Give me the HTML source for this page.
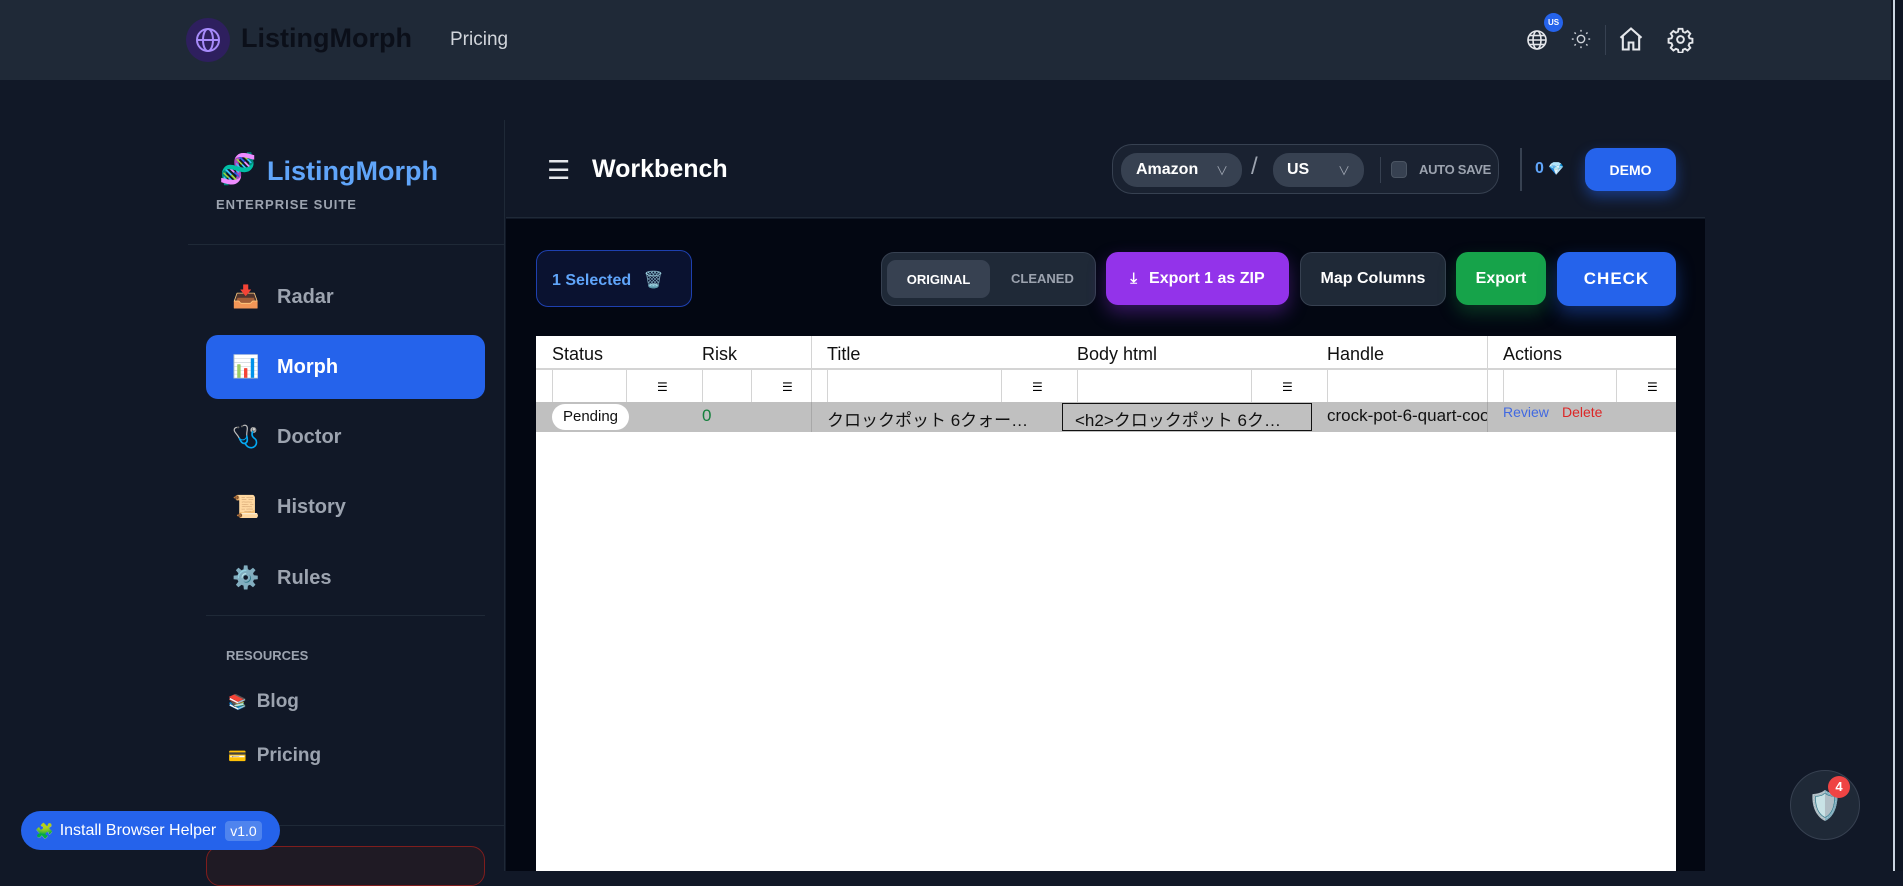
<!DOCTYPE html>
<html><head><meta charset="utf-8"><style>
*{box-sizing:border-box;margin:0;padding:0}
body{width:1903px;height:871px;overflow:hidden;background:#111827;font-family:"Liberation Sans","Noto Sans CJK JP",sans-serif;position:relative}
.a{position:absolute}
.nav{position:absolute;left:206px;width:279px;height:64px;display:flex;align-items:center;font-size:20px;font-weight:bold;color:#9ca3af}
.nav .ic{width:34px;margin-left:23px;margin-right:14px;font-size:22px;text-align:center}
.btn{position:absolute;display:flex;align-items:center;justify-content:center;color:#fff;font-weight:bold;font-size:16px;border-radius:12px}
.th{position:absolute;top:344px;font-size:18px;color:#111}
.fc{position:absolute;top:369px;height:33px;border-left:1px solid #d4d4d4}
.fi{position:absolute;top:380px;font-size:12px}
.td{position:absolute;top:406px;font-size:17px;color:#111;white-space:nowrap}
</style></head><body>
<div class="a" style="left:0;top:0;width:1891px;height:80px;background:#1f2937"></div>
<div class="a" style="left:1891px;top:0;width:12px;height:871px;background:#0f1623"></div>
<div class="a" style="left:1893px;top:0;width:2px;height:871px;background:#cbd5e1"></div>
<div class="a" style="left:186px;top:18px;width:44px;height:44px;border-radius:50%;background:#2e1f5e"></div>
<svg class="a" style="left:193px;top:25px" width="30" height="30" viewBox="0 0 30 30" fill="none" stroke="#a78bfa" stroke-width="2"><circle cx="15" cy="15" r="11"/><ellipse cx="15" cy="15" rx="5" ry="11"/><line x1="4" y1="15" x2="26" y2="15"/></svg>
<div class="a" style="left:241px;top:23px;font-size:27px;font-weight:bold;color:#0b0f19">ListingMorph</div>
<div class="a" style="left:450px;top:29px;font-size:19px;color:#d1d5db">Pricing</div>
<svg class="a" style="left:1525px;top:28px" width="24" height="24" viewBox="0 0 24 24" fill="none" stroke="#e5e7eb" stroke-width="1.6"><circle cx="12" cy="12" r="9"/><ellipse cx="12" cy="12" rx="4" ry="9"/><line x1="3" y1="12" x2="21" y2="12"/><line x1="4.5" y1="7.5" x2="19.5" y2="7.5"/><line x1="4.5" y1="16.5" x2="19.5" y2="16.5"/></svg>
<div class="a" style="left:1544px;top:13px;width:19px;height:19px;border-radius:50%;background:#2563eb;color:#fff;font-size:8px;font-weight:bold;text-align:center;line-height:19px">US</div>
<svg class="a" style="left:1570px;top:28px" width="22" height="22" viewBox="0 0 24 24" fill="none" stroke="#d1d5db" stroke-width="1.5"><circle cx="12" cy="12" r="4"/><path d="M12 2v2M12 20v2M2 12h2M20 12h2M4.9 4.9l1.4 1.4M17.7 17.7l1.4 1.4M4.9 19.1l1.4-1.4M17.7 6.3l1.4-1.4"/></svg>
<div class="a" style="left:1605px;top:25px;width:1px;height:30px;background:#374151"></div>
<svg class="a" style="left:1617px;top:25px" width="28" height="28" viewBox="0 0 24 24" fill="none" stroke="#e5e7eb" stroke-width="1.8"><path d="M3 11L12 3l9 8M5 9.5V21h5v-6h4v6h5V9.5"/></svg>
<svg class="a" style="left:1667px;top:26px" width="27" height="27" viewBox="0 0 24 24" fill="none" stroke="#e5e7eb" stroke-width="1.7"><circle cx="12" cy="12" r="3"/><path d="M10.3 2.5h3.4l.5 2.6 1.9.8 2.2-1.5 2.4 2.4-1.5 2.2.8 1.9 2.6.5v3.4l-2.6.5-.8 1.9 1.5 2.2-2.4 2.4-2.2-1.5-1.9.8-.5 2.6h-3.4l-.5-2.6-1.9-.8-2.2 1.5-2.4-2.4 1.5-2.2-.8-1.900-2.6-.5v-3.4l2.6-.5.8-1.9-1.5-2.2 2.4-2.4 2.2 1.5 1.9-.8z"/></svg>

<div class="a" style="left:188px;top:120px;width:317px;height:751px;background:#111827;border-right:1px solid #1f2937"></div>
<div class="a" style="left:219px;top:152px;font-size:30px">🧬</div>
<div class="a" style="left:267px;top:156px;font-size:27px;font-weight:bold;color:#60a5fa">ListingMorph</div>
<div class="a" style="left:216px;top:197px;font-size:13px;font-weight:bold;color:#9ca3af;letter-spacing:1px">ENTERPRISE SUITE</div>
<div class="a" style="left:188px;top:244px;width:317px;height:1px;background:#1f2937"></div>
<div class="nav" style="top:265px"><span class="ic">📥</span>Radar</div>
<div class="nav" style="top:335px;background:#2563eb;color:#fff;border-radius:12px"><span class="ic">📊</span>Morph</div>
<div class="nav" style="top:405px"><span class="ic">🩺</span>Doctor</div>
<div class="nav" style="top:475px"><span class="ic">📜</span>History</div>
<div class="nav" style="top:546px"><span class="ic">⚙️</span>Rules</div>
<div class="a" style="left:206px;top:615px;width:279px;height:1px;background:#1f2937"></div>
<div class="a" style="left:226px;top:648px;font-size:13px;font-weight:bold;color:#9ca3af">RESOURCES</div>
<div class="a" style="left:228px;top:691px;font-size:19px;font-weight:bold;color:#9ca3af"><span style="font-size:15px;margin-right:10px">📚</span>Blog</div>
<div class="a" style="left:228px;top:745px;font-size:19px;font-weight:bold;color:#9ca3af"><span style="font-size:15px;margin-right:10px">💳</span>Pricing</div>
<div class="a" style="left:188px;top:825px;width:317px;height:1px;background:#1f2937"></div>
<div class="a" style="left:206px;top:846px;width:279px;height:40px;border:1px solid #7f1d1d;border-radius:14px;background:#1f1a24"></div>

<div class="a" style="left:21px;top:811px;width:259px;height:39px;border-radius:20px;background:#2563eb;display:flex;align-items:center;color:#fff;font-size:16px"><span style="margin-left:14px;margin-right:6px;font-size:15px">🧩</span>Install Browser Helper<span style="margin-left:9px;background:#4f84ee;border-radius:4px;padding:2px 5px;font-size:14px">v1.0</span></div>

<div class="a" style="left:506px;top:120px;width:1199px;height:98px;background:#111827;border-bottom:1px solid #1f2937"></div>
<div class="a" style="left:506px;top:219px;width:1199px;height:652px;background:#030712"></div>
<div class="a" style="left:547px;top:155px;font-size:26px;color:#e5e7eb">☰</div>
<div class="a" style="left:592px;top:155px;font-size:25px;font-weight:bold;color:#fff">Workbench</div>
<div class="a" style="left:1112px;top:144px;width:387px;height:50px;border-radius:20px;background:#1a2231;border:1px solid #374151"></div>
<div class="a" style="left:1121px;top:153px;width:121px;height:34px;border-radius:16px;background:#374151;color:#fff;font-weight:bold;font-size:16px;padding:8px 0 0 15px">Amazon<span style="position:absolute;right:14px;color:#9ca3af;font-weight:normal;font-size:12px;top:9px">∨</span></div>
<div class="a" style="left:1251px;top:153px;font-size:24px;color:#9ca3af">/</div>
<div class="a" style="left:1273px;top:153px;width:91px;height:34px;border-radius:16px;background:#374151;color:#fff;font-weight:bold;font-size:16px;padding:8px 0 0 14px">US<span style="position:absolute;right:14px;color:#9ca3af;font-weight:normal;font-size:12px;top:9px">∨</span></div>
<div class="a" style="left:1380px;top:157px;width:1px;height:26px;background:#374151"></div>
<div class="a" style="left:1391px;top:161px;width:16px;height:17px;border-radius:4px;background:#374151;border:1px solid #4b5563"></div>
<div class="a" style="left:1419px;top:162px;font-size:13px;font-weight:bold;color:#9ca3af;letter-spacing:-0.3px">AUTO SAVE</div>
<div class="a" style="left:1520px;top:148px;width:2px;height:43px;background:#374151"></div>
<div class="a" style="left:1535px;top:160px;font-size:16px;font-weight:bold;color:#60a5fa">0 <span style="color:#67e8f9;font-size:13px">💎</span></div>
<div class="btn" style="left:1585px;top:148px;width:91px;height:43px;background:#2563eb;font-size:14px;box-shadow:0 6px 14px rgba(37,99,235,.45)">DEMO</div>

<div class="a" style="left:536px;top:250px;width:156px;height:57px;border-radius:12px;background:#0a1230;border:1px solid #1e40af;color:#60a5fa;font-weight:bold;font-size:16px;padding:19px 0 0 15px">1 Selected <span style="margin-left:8px">🗑️</span></div>
<div class="a" style="left:881px;top:252px;width:215px;height:54px;border-radius:13px;background:#1f2937;border:1px solid #374151"></div>
<div class="btn" style="left:887px;top:260px;width:103px;height:38px;background:#374151;font-size:13px;border-radius:9px">ORIGINAL</div>
<div class="a" style="left:1011px;top:271px;font-size:13px;font-weight:bold;color:#9ca3af">CLEANED</div>
<div class="btn" style="left:1106px;top:252px;width:183px;height:53px;background:#9333ea;box-shadow:0 8px 18px rgba(147,51,234,.35)"><span style="font-size:15px;margin-right:12px">⤓</span>Export 1 as ZIP</div>
<div class="btn" style="left:1300px;top:252px;width:146px;height:54px;background:#1f2937;border:1px solid #374151">Map Columns</div>
<div class="btn" style="left:1456px;top:252px;width:90px;height:53px;background:#16a34a;box-shadow:0 8px 18px rgba(22,163,74,.3)">Export</div>
<div class="btn" style="left:1557px;top:252px;width:119px;height:54px;background:#2563eb;font-size:17px;letter-spacing:1px;box-shadow:0 8px 18px rgba(37,99,235,.4)">CHECK</div>

<div class="a" style="left:536px;top:336px;width:1140px;height:535px;background:#fff"></div>
<div class="a" style="left:536px;top:368px;width:1140px;height:2px;background:#d4d4d4"></div>
<div class="a" style="left:811px;top:336px;width:1px;height:96px;background:#d4d4d4"></div>
<div class="a" style="left:1487px;top:336px;width:1px;height:96px;background:#d4d4d4"></div>
<div class="th" style="left:552px">Status</div>
<div class="th" style="left:702px">Risk</div>
<div class="th" style="left:827px">Title</div>
<div class="th" style="left:1077px">Body html</div>
<div class="th" style="left:1327px">Handle</div>
<div class="th" style="left:1503px">Actions</div>
<div class="fc" style="left:552px"></div><div class="fc" style="left:626px"></div><div class="fc" style="left:702px"></div><div class="fc" style="left:751px"></div>
<div class="fc" style="left:827px"></div><div class="fc" style="left:1001px"></div><div class="fc" style="left:1077px"></div><div class="fc" style="left:1251px"></div>
<div class="fc" style="left:1327px"></div><div class="fc" style="left:1503px"></div><div class="fc" style="left:1616px"></div>
<div class="fi" style="left:657px">☰</div><div class="fi" style="left:782px">☰</div><div class="fi" style="left:1032px">☰</div><div class="fi" style="left:1282px">☰</div><div class="fi" style="left:1647px">☰</div>
<div class="a" style="left:536px;top:402px;width:1140px;height:30px;background:#c0c0c0"></div>
<div class="a" style="left:811px;top:402px;width:1px;height:30px;background:#a8a8a8"></div>
<div class="a" style="left:1487px;top:402px;width:1px;height:30px;background:#a8a8a8"></div>
<div class="a" style="left:552px;top:404px;width:77px;height:26px;border-radius:13px;background:#fff;font-size:15px;color:#111;text-align:center;line-height:26px">Pending</div>
<div class="td" style="left:702px;color:#15803d">0</div>
<div class="td" style="left:827px">クロックポット 6クォー…</div>
<div class="a" style="left:1062px;top:403px;width:250px;height:28px;border:1px solid #111"></div>
<div class="td" style="left:1075px">&lt;h2&gt;クロックポット 6ク…</div>
<div class="td" style="left:1327px;width:160px;overflow:hidden">crock-pot-6-quart-cooker</div>
<div class="a" style="left:1503px;top:404px;font-size:14px;color:#4169e1">Review</div>
<div class="a" style="left:1562px;top:404px;font-size:14px;color:#dc2626">Delete</div>

<div class="a" style="left:1790px;top:770px;width:70px;height:70px;border-radius:50%;background:#1f2937;border:1px solid #374151;display:flex;align-items:center;justify-content:center;font-size:28px">🛡️</div>
<div class="a" style="left:1828px;top:776px;width:22px;height:22px;border-radius:50%;background:#ef4444;color:#fff;font-size:13px;font-weight:bold;text-align:center;line-height:22px">4</div>
</body></html>
